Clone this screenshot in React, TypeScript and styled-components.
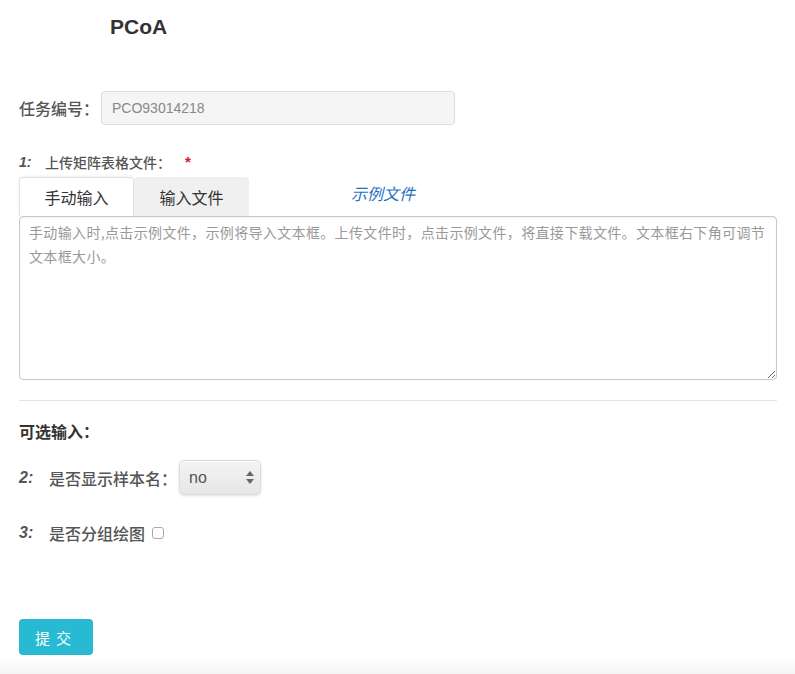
import React from "react";
import styled, { createGlobalStyle } from "styled-components";

const Global = createGlobalStyle`
  html, body { margin: 0; padding: 0; background: #fff; }
  body { font-family: "Liberation Sans", "Noto Sans CJK SC", sans-serif; color: #333; }
  * { box-sizing: border-box; }
`;

const Page = styled.div`
  width: 795px;
  min-height: 674px;
  display: flex;
  flex-direction: column;
  padding: 0 18px 0 19px;
`;

const Title = styled.h1`
  margin: 13px 0 0 91px;
  height: 28px;
  line-height: 28px;
  font-size: 21px;
  font-weight: bold;
  color: #333;
`;

const FieldRow = styled.div<{ $mt: number }>`
  display: flex;
  align-items: center;
  margin-top: ${(p) => p.$mt}px;
`;

const Label = styled.label`
  width: 82px;
  font-size: 16px;
  line-height: 20px;
  color: #555;
  font-weight: 500;
  font-family: "Noto Sans CJK SC", sans-serif;
`;

const TextInput = styled.input`
  width: 354px;
  height: 34px;
  border: 1px solid #ddd;
  border-radius: 4px;
  background: #f5f5f5;
  padding: 0 10px;
  font-family: "Liberation Sans", sans-serif;
  font-size: 14px;
  color: #888;
  outline: none;
`;

const StepLabel = styled.div<{ $size: number; $weight: number; $mt: number; $lh: number }>`
  display: flex;
  align-items: center;
  margin-top: ${(p) => p.$mt}px;
  font-size: ${(p) => p.$size}px;
  line-height: ${(p) => p.$lh}px;
  height: ${(p) => p.$lh}px;
  font-weight: ${(p) => p.$weight};
  color: #555;
  font-family: "Noto Sans CJK SC", sans-serif;
`;

const StepNum = styled.span<{ $w: number; $size: number }>`
  display: inline-block;
  width: ${(p) => p.$w}px;
  font-size: ${(p) => p.$size}px;
  font-style: italic;
  font-weight: bold;
  font-family: "Liberation Sans", sans-serif;
  color: #555;
`;

const Star = styled.span`
  color: #e0141e;
  font-weight: bold;
  margin-left: 14px;
  font-family: "Liberation Sans", sans-serif;
  font-size: 15px;
`;

const TabBar = styled.div`
  display: flex;
  margin-top: 7px;
  height: 39px;
  align-items: flex-end;
`;

const Tab = styled.div<{ $active?: boolean }>`
  width: 115px;
  height: 39px;
  display: flex;
  align-items: center;
  justify-content: center;
  font-size: 16px;
  color: #333;
  font-family: "Noto Sans CJK SC", sans-serif;
  border-radius: 4px 4px 0 0;
  background: ${(p) => (p.$active ? "#fff" : "#f0f0f0")};
  border: ${(p) => (p.$active ? "1px solid #e2e2e2" : "none")};
  border-bottom: none;
  box-shadow: ${(p) => (p.$active ? "0 -1px 3px rgba(0,0,0,0.06)" : "none")};
`;

const ExampleLink = styled.a`
  margin-left: 102px;
  align-self: flex-start;
  margin-top: 4px;
  font-size: 16px;
  font-style: italic;
  color: #1f6fc0;
  font-family: "Noto Sans CJK SC", sans-serif;
  text-decoration: none;
`;

const TextArea = styled.textarea`
  width: 758px;
  height: 164px;
  border: 1px solid #c8c8c8;
  border-radius: 4px;
  padding: 3px 9px;
  font-family: "Noto Sans CJK SC", sans-serif;
  font-size: 14px;
  letter-spacing: 0.35px;
  line-height: 24px;
  color: #333;
  box-shadow: inset 0 1px 2px rgba(0,0,0,0.06);
  outline: none;
  display: block;
  &::placeholder { color: #999; }
`;

const Divider = styled.hr`
  margin: 20px 0 0;
  border: none;
  border-top: 1px solid #e3e3e3;
  height: 0;
`;

const SectionTitle = styled.div`
  margin-top: 20px;
  line-height: 20px;
  font-size: 16px;
  font-weight: bold;
  color: #333;
  font-family: "Noto Sans CJK SC", sans-serif;
`;

const SelectWrap = styled.div`
  position: relative;
  margin-left: 2px;
  width: 82px;
  height: 35px;
`;

const Select = styled.select`
  appearance: none;
  width: 82px;
  height: 35px;
  border: 1px solid #ddd;
  border-radius: 5px;
  background: linear-gradient(#f4f4f4, #e6e6e6);
  box-shadow: 0 1px 3px rgba(0,0,0,0.12), inset 0 1px 0 #fff;
  padding: 0 9px;
  font-family: "Liberation Sans", sans-serif;
  font-size: 16px;
  color: #555;
  outline: none;
`;

const Arrows = styled.svg`
  position: absolute;
  right: 7px;
  top: 11px;
  pointer-events: none;
`;

const Check = styled.input`
  appearance: none;
  width: 12px;
  height: 12px;
  margin: 0 0 0 7px;
  border: 1px solid #aaa;
  border-radius: 3px;
  background: #fff;
`;

const SubmitButton = styled.button`
  margin-top: 76px;
  width: 74px;
  height: 36px;
  border: none;
  border-radius: 4px;
  background: #28b9d3;
  color: #fff;
  font-size: 15px;
  letter-spacing: 6px;
  padding-left: 6px;
  font-family: "Noto Sans CJK SC", sans-serif;
`;

const Footer = styled.div`
  margin: 0 -18px 0 -19px;
  flex: 1;
  min-height: 19px;
  background: linear-gradient(#fff, #f5f5f5);
`;

export default function App() {
  return (
    <>
      <Global />
      <Page>
        <Title>PCoA</Title>
        <FieldRow $mt={50}>
          <Label>任务编号：</Label>
          <TextInput value="PCO93014218" readOnly />
        </FieldRow>
        <StepLabel $size={14} $weight={500} $mt={29} $lh={16}>
          <StepNum $w={26} $size={14}>1:</StepNum>
          上传矩阵表格文件：
          <Star>*</Star>
        </StepLabel>
        <TabBar>
          <Tab $active>手动输入</Tab>
          <Tab>输入文件</Tab>
          <ExampleLink href="#">示例文件</ExampleLink>
        </TabBar>
        <TextArea placeholder="手动输入时,点击示例文件，示例将导入文本框。上传文件时，点击示例文件，将直接下载文件。文本框右下角可调节文本框大小。" />
        <Divider />
        <SectionTitle>可选输入：</SectionTitle>
        <FieldRow $mt={19}>
          <StepLabel $size={16} $weight={500} $mt={0} $lh={20}>
            <StepNum $w={30} $size={16}>2:</StepNum>
            是否显示样本名：
          </StepLabel>
          <SelectWrap>
            <Select defaultValue="no">
              <option value="no">no</option>
              <option value="yes">yes</option>
            </Select>
            <Arrows width="8" height="13" viewBox="0 0 8 13">
              <path d="M4 0 L8 5 L0 5 Z" fill="#666" />
              <path d="M0 8 L8 8 L4 13 Z" fill="#666" />
            </Arrows>
          </SelectWrap>
        </FieldRow>
        <FieldRow $mt={28}>
          <StepLabel $size={16} $weight={500} $mt={0} $lh={20}>
            <StepNum $w={30} $size={16}>3:</StepNum>
            是否分组绘图
          </StepLabel>
          <Check type="checkbox" />
        </FieldRow>
        <div>
          <SubmitButton>提交</SubmitButton>
        </div>
        <Footer />
      </Page>
    </>
  );
}
